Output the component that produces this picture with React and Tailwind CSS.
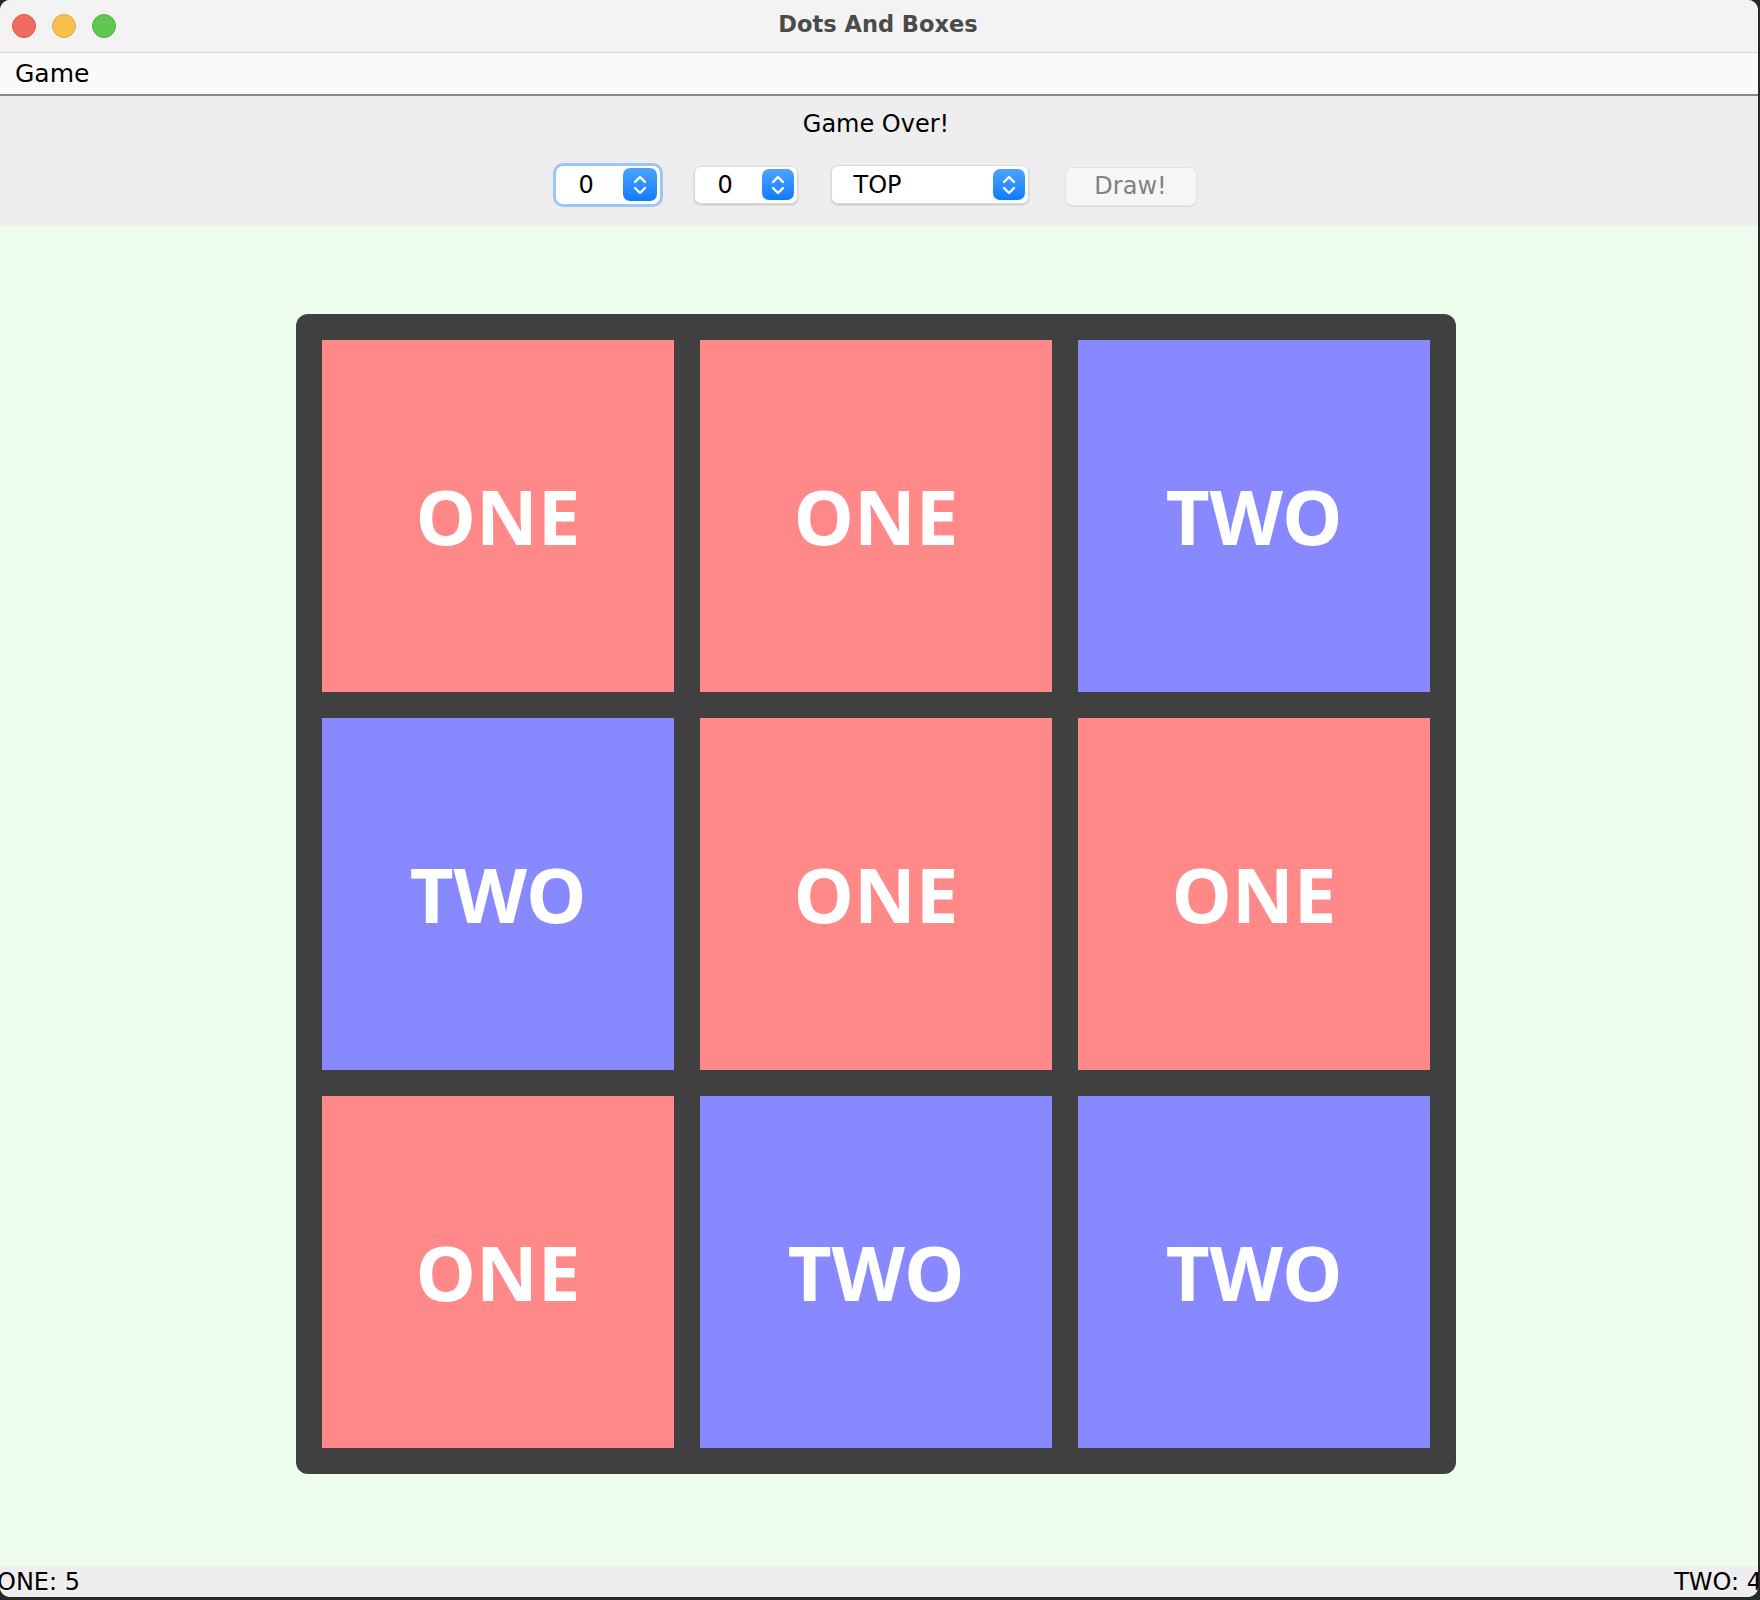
import React from "react";

const UI = { fontFamily: '"DejaVu Sans", "Liberation Sans", sans-serif' };
const BIG = { fontFamily: '"Noto Sans", "DejaVu Sans", sans-serif' };

function Chevrons() {
  return (
    <svg width="16" height="24" viewBox="0 0 16 24" fill="none">
      <path d="M3 9 L8 4 L13 9" stroke="white" strokeWidth="2.4" strokeLinecap="round" strokeLinejoin="round" />
      <path d="M3 15 L8 20 L13 15" stroke="white" strokeWidth="2.4" strokeLinecap="round" strokeLinejoin="round" />
    </svg>
  );
}

function BlueBtn({ big }) {
  return (
    <div
      className={
        (big ? "w-[34px] h-[33px] " : "w-[32px] h-[31px] ") +
        "rounded-[7px] bg-gradient-to-b from-[#4aa3ff] to-[#0a7bff] flex items-center justify-center"
      }
    >
      <Chevrons />
    </div>
  );
}

function Spinner({ focused }) {
  return (
    <div
      className={
        "w-[104px] h-[38px] bg-white rounded-[7px] flex items-center justify-between pl-[23px] pr-[3px] " +
        (focused
          ? "shadow-[0_0_0_3px_#9cc6f5]"
          : "border border-[#dcdcdc] shadow-[0_1px_2px_rgba(0,0,0,0.2)]")
      }
    >
      <span className="text-[24px] leading-none text-black">0</span>
      <BlueBtn big={focused} />
    </div>
  );
}

function Cell({ who }) {
  const one = who === "ONE";
  return (
    <div
      className={
        "w-[352px] h-[352px] flex items-center justify-center " +
        (one ? "bg-[#ff8888]" : "bg-[#8888ff]")
      }
    >
      <span style={BIG} className="text-white font-bold text-[76px] leading-none">
        {who}
      </span>
    </div>
  );
}

export default function App() {
  const cells = ["ONE", "ONE", "TWO", "TWO", "ONE", "ONE", "ONE", "TWO", "TWO"];
  return (
    <div className="w-[1760px] h-[1600px] bg-[#262b27] overflow-hidden" style={UI}>
      <div className="w-[1758px] h-[1597px] rounded-[10px] overflow-hidden flex flex-col bg-[#eeeeee]">
        {/* title bar */}
        <div className="h-[53px] shrink-0 bg-[#f3f3f3] border-b border-[#d6d6d6] flex items-center relative">
          <div className="flex gap-[16px] pl-[12px]">
            <div className="w-[24px] h-[24px] rounded-full bg-[#ef6b60] border border-[#dc5a50]" />
            <div className="w-[24px] h-[24px] rounded-full bg-[#f8bf4f] border border-[#e0a93c]" />
            <div className="w-[24px] h-[24px] rounded-full bg-[#62c554] border border-[#52ad46]" />
          </div>
          <div className="absolute inset-0 flex items-center justify-center pr-[2px] pb-[3px]">
            <span className="text-[22.5px] font-bold text-[#4b4b4b]">Dots And Boxes</span>
          </div>
        </div>
        {/* menu bar */}
        <div className="h-[43px] shrink-0 bg-[#fafafa] border-b-2 border-[#888888] flex items-center pl-[15px]">
          <span className="text-[25px] leading-none text-black">Game</span>
        </div>
        {/* control panel */}
        <div className="h-[130px] shrink-0 bg-[#eeeeee] flex flex-col items-center pt-[14px] pr-[6px]">
          <div className="text-[24px] leading-[28px] text-black">Game Over!</div>
          <div className="mt-[25px] h-[43px] flex items-center">
            <Spinner focused />
            <div className="ml-[34px]">
              <Spinner />
            </div>
            <div className="ml-[33px] w-[198px] h-[39px] bg-white rounded-[7px] border border-[#dcdcdc] shadow-[0_1px_2px_rgba(0,0,0,0.2)] flex items-center justify-between pl-[22px] pr-[3px]">
              <span className="text-[24px] leading-none text-black">TOP</span>
              <BlueBtn />
            </div>
            <div className="ml-[36px] w-[132px] h-[39px] mt-[3px] bg-[#f6f6f6] rounded-[7px] border border-[#e2e2e2] shadow-[0_1px_1px_rgba(0,0,0,0.08)] flex items-center justify-center">
              <span className="text-[24px] leading-none text-[#828282]">Draw!</span>
            </div>
          </div>
        </div>
        {/* board area */}
        <div className="h-[1340px] shrink-0 bg-[#edfded] pt-[88px] pl-[296px]">
          <div className="w-[1160px] h-[1160px] bg-[#404040] rounded-[12px] p-[26px] grid grid-cols-3 gap-[26px]">
            {cells.map((c, i) => (
              <Cell key={i} who={c} />
            ))}
          </div>
        </div>
        {/* status bar */}
        <div className="flex-1 bg-[#eeeeee] flex items-center justify-between">
          <span className="text-[24px] leading-none text-black ml-[-3px]">ONE: 5</span>
          <span className="text-[24px] leading-none text-black mr-[-4px]">TWO: 4</span>
        </div>
      </div>
    </div>
  );
}
